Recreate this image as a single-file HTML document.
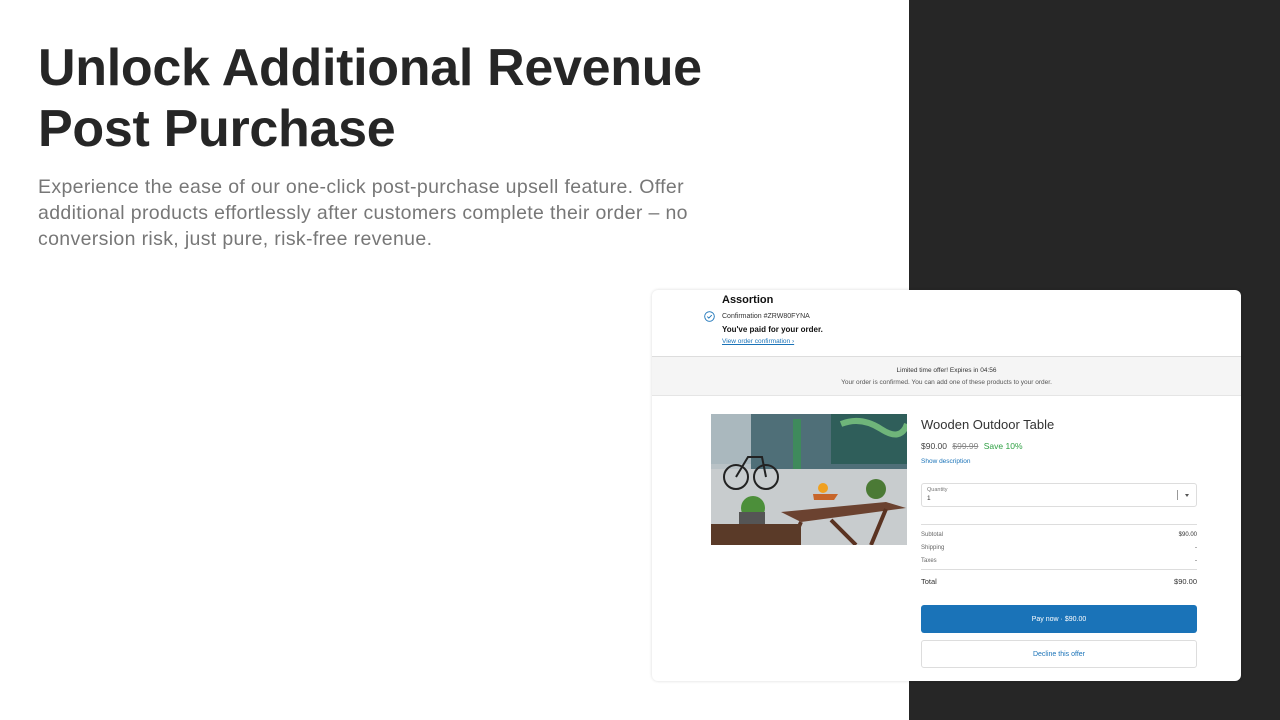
<!DOCTYPE html>
<html><head><meta charset="utf-8"><style>
*{margin:0;padding:0;box-sizing:border-box}
body{width:1280px;height:720px;position:relative;overflow:hidden;background:#fff;font-family:"Liberation Sans",sans-serif;color:#222}
.dark{position:absolute;left:909px;top:0;width:371px;height:720px;background:#262626}
h1{position:absolute;left:38px;top:38px;font-size:52px;line-height:61px;font-weight:700;color:#262626;letter-spacing:-0.3px}
p.lead{position:absolute;left:38px;top:174px;width:680px;font-size:19.5px;line-height:26px;color:#777;letter-spacing:0.35px}
.card{position:absolute;left:652px;top:290px;width:589px;height:391px;background:#fff;border-radius:6px;overflow:hidden;box-shadow:0 0 3px rgba(0,0,0,.15)}
.a{position:absolute;font-size:7px;color:#333}
.band{position:absolute;left:0;top:66px;width:589px;height:40px;background:#f5f5f5;border-top:1px solid #ddd;border-bottom:1px solid #e5e5e5;text-align:center}
.row{position:absolute;left:269px;width:276px;font-size:6px;color:#666}
.row span{float:right;color:#333}
.blue{color:#1a73b8}
</style></head><body>
<h1>Unlock Additional Revenue<br>Post Purchase</h1>
<p class="lead">Experience the ease of our one-click post-purchase upsell feature. Offer additional products effortlessly after customers complete their order – no conversion risk, just pure, risk-free revenue.</p>
<div class="dark"></div>
<div class="card">
<div class="a" style="left:70px;top:4px;font-size:11px;font-weight:700;color:#111">Assortion</div>
<svg style="position:absolute;left:52px;top:21px" width="11" height="11" viewBox="0 0 11 11"><circle cx="5.5" cy="5.5" r="4.8" fill="none" stroke="#1a73b8" stroke-width="0.9"/><path d="M3.3 5.6l1.5 1.5 3-3" fill="none" stroke="#1a73b8" stroke-width="0.9"/></svg>
<div class="a" style="left:70px;top:23px">Confirmation #ZRW80FYNA</div>
<div class="a" style="left:70px;top:35px;font-size:8px;font-weight:700;color:#111">You've paid for your order.</div>
<div class="a blue" style="left:70px;top:48px;font-size:6.5px;text-decoration:underline">View order confirmation ›</div>
<div class="band"><div style="font-size:6.5px;color:#333;margin-top:10px">Limited time offer! Expires in 04:56</div><div style="font-size:6.5px;color:#555;margin-top:5px">Your order is confirmed. You can add one of these products to your order.</div></div>
<svg style="position:absolute;left:59px;top:124px" width="196" height="131" viewBox="0 0 196 131">
<rect width="196" height="131" fill="#b9c2c6"/>
<rect x="40" y="0" width="156" height="60" fill="#4f6f78"/>
<rect x="0" y="0" width="40" height="50" fill="#aab8be"/>
<rect x="120" y="0" width="76" height="50" fill="#2f5e5a"/>
<path d="M130 10q20-8 40 5t26-5" stroke="#6fb57a" stroke-width="6" fill="none"/>
<rect x="82" y="5" width="8" height="50" fill="#3f8a5c"/>
<rect x="0" y="55" width="196" height="76" fill="#c8ccce"/>
<circle cx="25" cy="63" r="12" fill="none" stroke="#222" stroke-width="2"/><circle cx="55" cy="63" r="12" fill="none" stroke="#222" stroke-width="2"/><path d="M25 63l12-20h14l4 20" stroke="#222" stroke-width="2" fill="none"/>
<path d="M70 98l105-10 20 6-105 14z" fill="#6b4230"/>
<path d="M90 108l-10 23M175 95l-15 36M120 106l25 25" stroke="#5a3322" stroke-width="4"/>
<circle cx="42" cy="94" r="12" fill="#4c8f3a"/><rect x="28" y="98" width="26" height="28" fill="#555"/>
<circle cx="165" cy="75" r="10" fill="#4b7a35"/>
<path d="M102 80h25l-4 6h-20z" fill="#c7652a"/><circle cx="112" cy="74" r="5" fill="#f0a020"/>
<rect x="0" y="110" width="90" height="21" fill="#5a3a28"/>
</svg>
<div class="a" style="left:269px;top:127px;font-size:13px;color:#333">Wooden Outdoor Table</div>
<div class="a" style="left:269px;top:151px;font-size:8.5px;color:#444">$90.00 <span style="text-decoration:line-through;color:#888;margin-left:3px">$99.99</span> <span style="color:#2ea043;margin-left:3px">Save 10%</span></div>
<div class="a blue" style="left:269px;top:168px;font-size:6.5px">Show description</div>
<div style="position:absolute;left:269px;top:193px;width:276px;height:24px;border:1px solid #ddd;border-radius:3px">
<div style="position:absolute;left:5px;top:3px;font-size:5.5px;color:#777">Quantity</div>
<div style="position:absolute;left:5px;top:11px;font-size:6.5px;color:#333">1</div>
<div style="position:absolute;right:18px;top:6px;width:1px;height:10px;background:#999"></div>
<div style="position:absolute;right:7px;top:10px;border:2.5px solid transparent;border-top:3px solid #555"></div></div>
<div style="position:absolute;left:269px;top:234px;width:276px;border-top:1px solid #ddd"></div>
<div class="row" style="top:242px">Subtotal<span>$90.00</span></div>
<div class="row" style="top:255px">Shipping<span>-</span></div>
<div class="row" style="top:268px">Taxes<span>-</span></div>
<div style="position:absolute;left:269px;top:279px;width:276px;border-top:1px solid #ddd"></div>
<div class="row" style="top:287px;font-size:7.5px;color:#333">Total<span style="font-size:7.5px">$90.00</span></div>
<div style="position:absolute;left:269px;top:315px;width:276px;height:28px;background:#1a73b8;border-radius:3px;color:#fff;font-size:7px;text-align:center;line-height:29px">Pay now · $90.00</div>
<div style="position:absolute;left:269px;top:350px;width:276px;height:28px;border:1px solid #ddd;border-radius:3px;color:#1a73b8;font-size:7px;text-align:center;line-height:27px">Decline this offer</div>
</div>
</body></html>
